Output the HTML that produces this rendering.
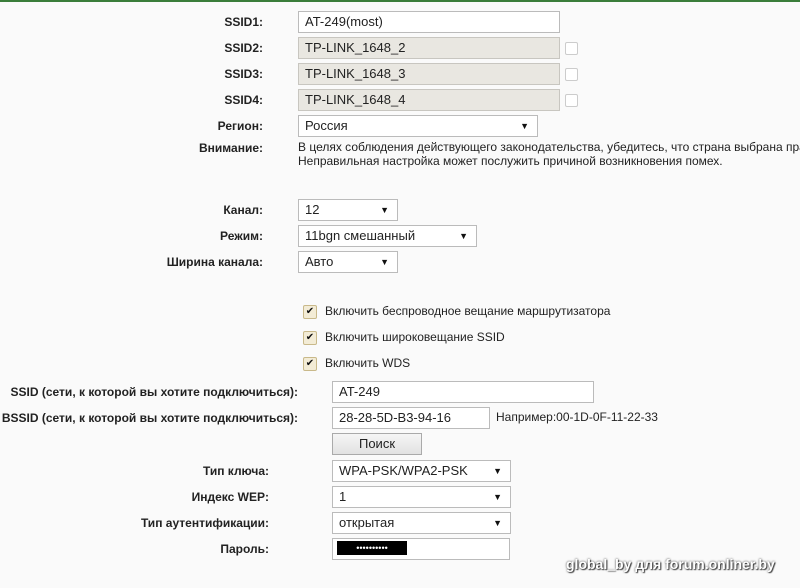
<!DOCTYPE html>
<html><head><meta charset="utf-8"><style>
body{margin:0;width:800px;height:588px;background:#fafafa;position:relative;overflow:hidden;font-family:"Liberation Sans",Arial,sans-serif;font-size:13px;color:#222}
.a{position:absolute}
.top{left:0;top:0;width:800px;height:2px;background:#3a7d3a}
.l{position:absolute;font-weight:bold;font-size:12px;text-align:right;color:#222}
.in{position:absolute;box-sizing:border-box;height:22px;border:1px solid #bbb;background:#fff;padding-left:6px;line-height:20px;font-size:13px;color:#222}
.dis{background:#e9e7e1;border-color:#c8c6c0}
.sel::after{content:"▼";position:absolute;right:8px;top:0;font-size:9px;color:#111}
.cb{position:absolute;width:11px;height:11px;border:1px solid #ccc;border-radius:2px;background:#fff}
.ck{position:absolute;width:12px;height:12px;border:1px solid #c9b98a;border-radius:2px;background:#f3ecd6;font-size:10px;line-height:12px;text-align:center;color:#111}
.t{position:absolute;font-size:12px;color:#222}
</style></head><body>
<div class="a top"></div>
<div class="l" style="right:537px;top:15px">SSID1:</div>
<div class="in" style="left:298px;top:11px;width:262px">AT-249(most)</div>
<div class="l" style="right:537px;top:41px">SSID2:</div>
<div class="in dis" style="left:298px;top:37px;width:262px">TP-LINK_1648_2</div><div class="cb" style="left:565px;top:42px"></div>
<div class="l" style="right:537px;top:67px">SSID3:</div>
<div class="in dis" style="left:298px;top:63px;width:262px">TP-LINK_1648_3</div><div class="cb" style="left:565px;top:68px"></div>
<div class="l" style="right:537px;top:93px">SSID4:</div>
<div class="in dis" style="left:298px;top:89px;width:262px">TP-LINK_1648_4</div><div class="cb" style="left:565px;top:94px"></div>
<div class="l" style="right:537px;top:119px">Регион:</div>
<div class="in sel" style="left:298px;top:115px;width:240px">Россия</div>
<div class="l" style="right:537px;top:141px">Внимание:</div>
<div class="t" style="left:298px;top:140px;white-space:nowrap;line-height:14px">В целях соблюдения действующего законодательства, убедитесь, что страна выбрана пра<br>Неправильная настройка может послужить причиной возникновения помех.</div>
<div class="l" style="right:537px;top:203px">Канал:</div>
<div class="in sel" style="left:298px;top:199px;width:100px">12</div>
<div class="l" style="right:537px;top:229px">Режим:</div>
<div class="in sel" style="left:298px;top:225px;width:179px">11bgn смешанный</div>
<div class="l" style="right:537px;top:255px">Ширина канала:</div>
<div class="in sel" style="left:298px;top:251px;width:100px">Авто</div>
<div class="ck" style="left:303px;top:305px">✔</div><div class="t" style="left:325px;top:304px">Включить беспроводное вещание маршрутизатора</div>
<div class="ck" style="left:303px;top:331px">✔</div><div class="t" style="left:325px;top:330px">Включить широковещание SSID</div>
<div class="ck" style="left:303px;top:357px">✔</div><div class="t" style="left:325px;top:356px">Включить WDS</div>
<div class="l" style="right:502px;top:385px">SSID (сети, к которой вы хотите подключиться):</div>
<div class="in" style="left:332px;top:381px;width:262px">AT-249</div>
<div class="l" style="right:502px;top:411px">BSSID (сети, к которой вы хотите подключиться):</div>
<div class="in" style="left:332px;top:407px;width:158px">28-28-5D-B3-94-16</div>
<div class="t" style="left:496px;top:410px">Например:00-1D-0F-11-22-33</div>
<div class="a" style="left:332px;top:433px;width:90px;height:22px;box-sizing:border-box;border:1px solid #aaa;background:linear-gradient(#f6f6f6,#e2e2e2);text-align:center;line-height:20px;font-size:13px">Поиск</div>
<div class="l" style="right:531px;top:464px">Тип ключа:</div>
<div class="in sel" style="left:332px;top:460px;width:179px">WPA-PSK/WPA2-PSK</div>
<div class="l" style="right:531px;top:490px">Индекс WEP:</div>
<div class="in sel" style="left:332px;top:486px;width:179px">1</div>
<div class="l" style="right:531px;top:516px">Тип аутентификации:</div>
<div class="in sel" style="left:332px;top:512px;width:179px">открытая</div>
<div class="l" style="right:531px;top:542px">Пароль:</div>
<div class="in" style="left:332px;top:538px;width:178px"></div>
<div class="a" style="left:337px;top:541px;width:70px;height:14px;background:#000;color:#fff;font-size:9px;line-height:14px;text-align:center;overflow:hidden">••••••••••</div>
<div class="a" style="left:566px;top:556px;font-weight:bold;font-size:14px;color:#fff;text-shadow:0 0 2px #333,1px 1px 1px #444">global_by для forum.onliner.by</div>
</body></html>
